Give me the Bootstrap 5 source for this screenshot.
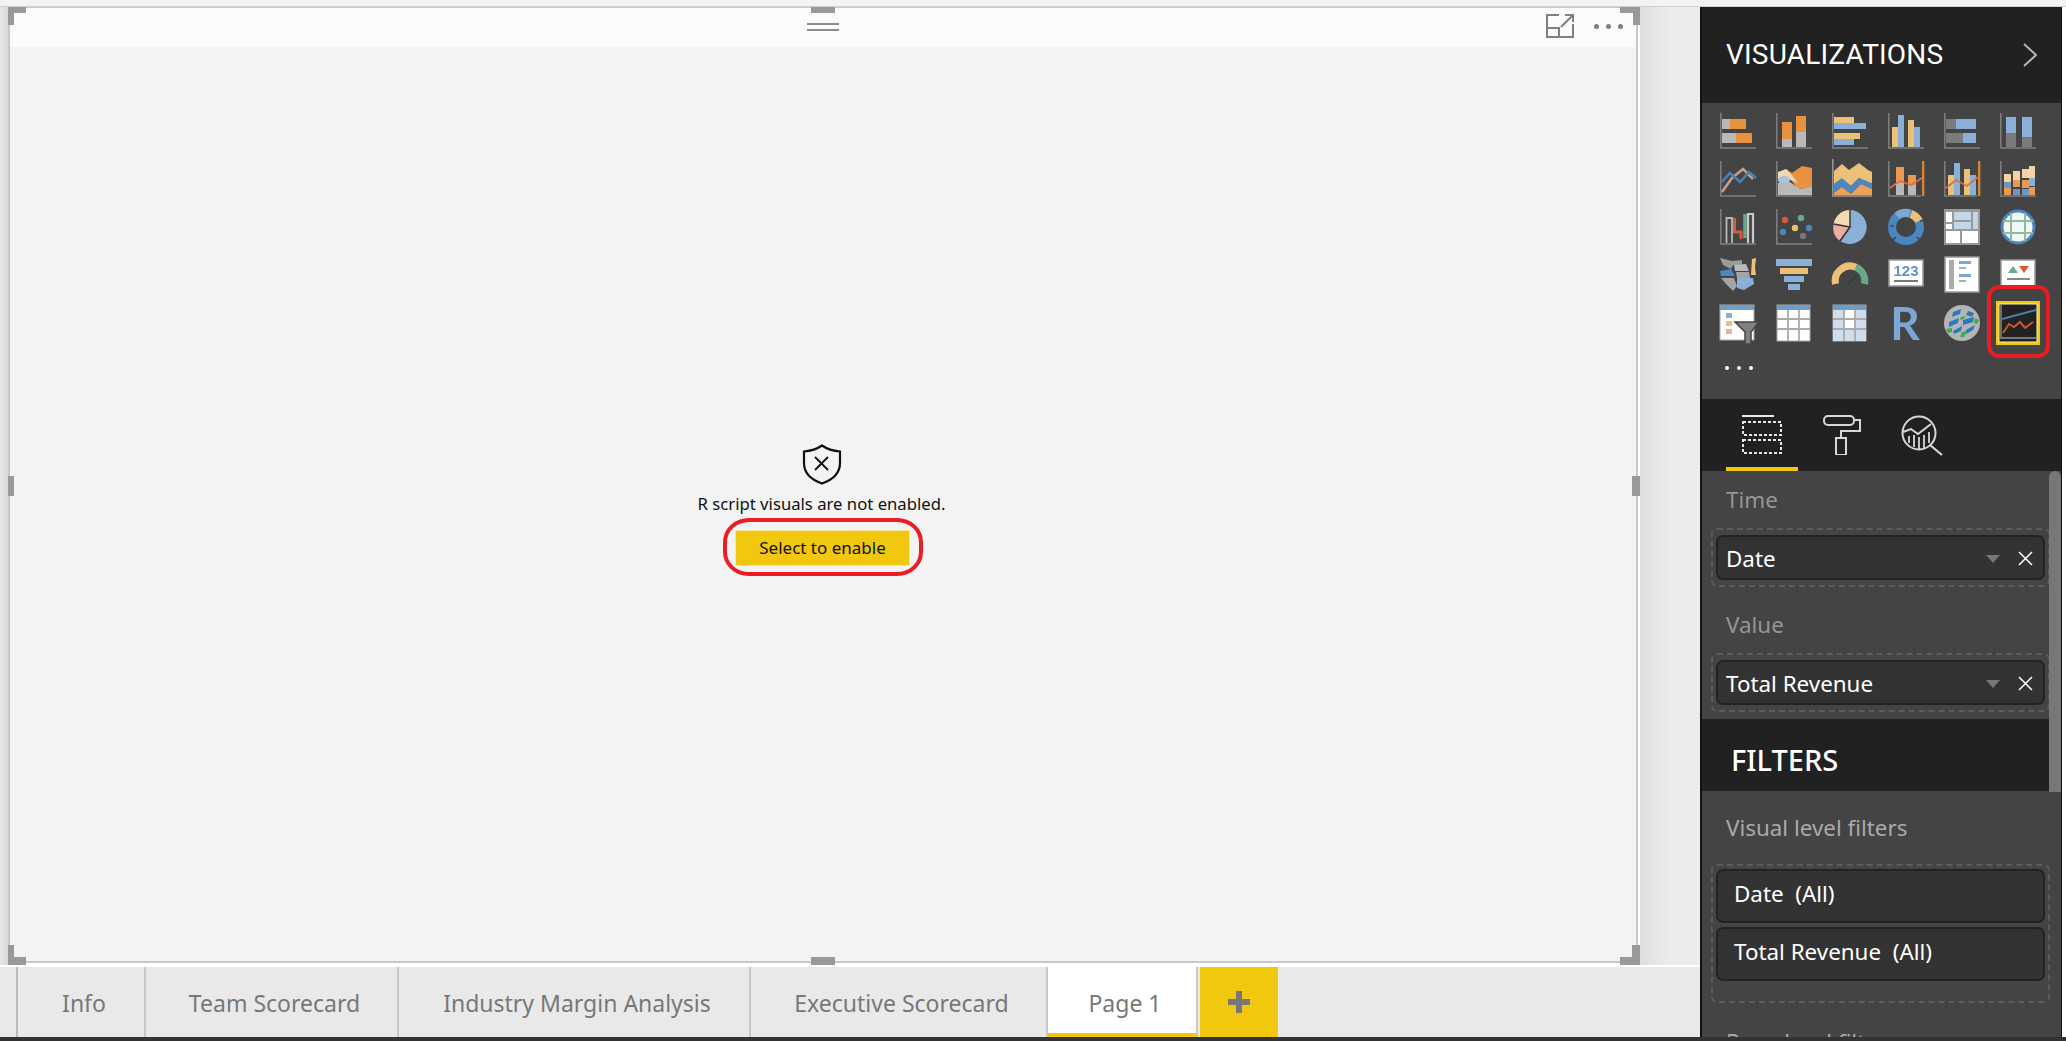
<!DOCTYPE html>
<html lang="en">
<head>
<meta charset="UTF-8">
<meta name="viewport" content="width=device-width, initial-scale=1.0">
<title>R script visual</title>
<link rel="stylesheet" href="https://cdn.jsdelivr.net/npm/bootstrap@5.3.0/dist/css/bootstrap.min.css">
<style>
html, body { height: 100%; }
body { font-family: "Noto Sans", "Open Sans", sans-serif; background: #fff; overflow: hidden; }
.app-root { height: 1041px; }
.top-strip { height: 7px; background: #f3f3f3; border-bottom: 1px solid #d0d0d0; flex: none; }
.bottom-strip { height: 4px; background: #333; flex: none; }
.work-area { width: 1700px; flex: none; }
.canvas-wrap { padding-left: 8px; padding-right: 62px; background: linear-gradient(90deg, #e8e8e8 0, #d8d8d8 8px, #dedede 1640px, #ececec 1670px); height: 958px; flex: none; }
.visual-box { height: 956px; background: #f3f3f3; border: 2px solid #c8c8c8; border-top-width: 1px; box-shadow: 2px 2px 0 #fff; }
.visual-head { height: 39px; background: #fbfbfb; }
.grip-lines { width: 32px; margin-bottom: 2px; }
.grip-lines i { display: block; height: 2px; background: #8c8c8c; }
.grip-lines i + i { margin-top: 4px; }
.head-dots i { width: 5px; height: 5px; background: #808080; border-radius: 50%; display: block; }
.head-tools { right: 13px; top: 6px; }
.visual-body { padding-top: 1px; padding-right: 3px; }
.warn-text { font-size: 16.7px; color: #111; line-height: 24px; margin-top: 7px; }
.enable-wrap { margin-top: 14px; margin-left: 2px; }
.enable-btn { width: 175px; height: 36px; background: #f2c80f; border: 1px solid #f6e9a8; border-radius: 0; color: #111; font-size: 17px; line-height: 20px; padding: 0; }
.red-ring { position: absolute; border: 4px solid #ed1c24; pointer-events: none; }
.ring-btn { left: -12px; right: -13px; top: -12px; bottom: -10px; border-radius: 26px / 24px; }
.ring-viz { left: 287px; top: 278px; width: 63px; height: 73px; border-radius: 12px; }
.size-grip { position: absolute; background: #999; }
.grip-tl-h { left: -2px; top: -1px; width: 18px; height: 6px; }
.grip-tl-v { left: -2px; top: -1px; width: 6px; height: 18px; }
.grip-tr-h { right: -4px; top: -1px; width: 20px; height: 6px; }
.grip-tr-v { right: -4px; top: -1px; width: 7px; height: 18px; }
.grip-bl-h { left: -2px; bottom: -4px; width: 18px; height: 8px; }
.grip-bl-v { left: -2px; bottom: -4px; width: 6px; height: 20px; }
.grip-br-h { right: -4px; bottom: -4px; width: 20px; height: 8px; }
.grip-br-v { right: -4px; bottom: -4px; width: 8px; height: 20px; }
.grip-ml { left: -2px; top: 468px; width: 6px; height: 20px; }
.grip-mr { right: -4px; top: 468px; width: 8px; height: 20px; }
.grip-tm { left: 801px; top: -1px; width: 24px; height: 6px; }
.grip-bm { left: 801px; bottom: -4px; width: 24px; height: 8px; }
.tab-strip { height: 72px; flex: none; border-top: 2px solid #fff; background: #e9e9e9; }
.tab-lead { width: 18px; border-right: 2px solid #bbb; }
.page-tab { font-size: 23px; color: #777; border-right: 2px solid #c8c8c8; display: flex; align-items: center; justify-content: center; padding-top: 2px; padding-left: 6px; white-space: nowrap; }
.tab-info { width: 128px; }
.tab-team { width: 253px; }
.tab-margin { width: 352px; }
.tab-exec { width: 297px; }
.tab-page { width: 150px; }
.page-tab.active-tab { background: #fff; border-bottom: 4px solid #f2c80f; padding-top: 6px; }
.add-tab { width: 78px; margin-left: 2px; background: #f2c80f; }
.side-pane { width: 366px; flex: none; background: #fff; }
.pane-inner { width: 362px; border-left: 2px solid #111; border-right: 1px solid #111; background: #444; color: #fff; height: 1030px; }
.pane-head { height: 96px; background: #212121; flex: none; padding: 0 24px; }
.pane-title { font-family: Roboto, sans-serif; font-size: 28px; letter-spacing: .2px; }
.viz-grid { height: 296px; flex: none; padding: 10px 0 0 18px; }
.viz-row { display: grid; grid-template-columns: repeat(6, 36px); column-gap: 20px; height: 48px; }
.viz-tile { width: 36px; height: 36px; display: block; filter: blur(.3px); overflow: visible; }
.viz-more { padding: 13px 0 0 5px; gap: 8px; }
.viz-more i { width: 4px; height: 4px; background: #fff; border-radius: 50%; display: block; }
.well-tabs { height: 72px; background: #212121; flex: none; padding-left: 24px; }
.well-tab { width: 72px; height: 72px; border-bottom: 4px solid transparent; }
.well-tab.tab-on { border-bottom-color: #f2c80f; }
.well-tab + .well-tab { width: 80px; padding-left: 7px; }
.fields-area { height: 248px; flex: none; position: relative; }
.pane-scroll { position: absolute; right: 0; top: 0; width: 12px; height: 321px; background: #777; border-radius: 6px 6px 0 0; z-index: 2; }
.field-label { font-size: 22.4px; line-height: 28px; color: #959595; padding-left: 24px; }
.drop-well { margin: 0 11px 0 9px; border: 2px dashed #5c5c5c; border-radius: 6px; padding: 5px 3px; }
.field-pill { height: 45px; background: #333; border: 2px solid #232323; border-radius: 7px; padding: 2px 10px 0 8px; font-size: 22.4px; }
.caret-down { width: 0; height: 0; border: 7px solid transparent; border-top: 8px solid #777; border-bottom: 0; margin-right: 18px; }
.filter-head { height: 72px; background: #212121; flex: none; padding: 10px 0 0 29px; font-size: 29px; font-weight: 500; }
.filter-well { padding-top: 3px; padding-bottom: 20px; }
.filter-pill { height: 54px; padding: 0 0 5px 16px; margin-bottom: 4px; }
.filter-note { color: #aaa; }
</style>
</head>
<body>
<div class="app-root d-flex flex-column">
  <div class="top-strip"></div>
  <div class="d-flex flex-grow-1 overflow-hidden">
    <div class="work-area d-flex flex-column">
      <div class="canvas-wrap">
        <div class="visual-box d-flex flex-column position-relative">
          <div class="visual-head d-flex justify-content-center align-items-center position-relative">
            <div class="grip-lines"><i></i><i></i></div>
            <div class="head-tools position-absolute d-flex align-items-center gap-3">
              <svg width="28" height="24" viewBox="0 0 28 24" fill="none" stroke="#808080" stroke-width="2"><path d="M13 1H1V23H27V10"/><path d="M1 14H13V23"/><path d="M15 13L27 1M19 1H27V8"/></svg>
              <div class="head-dots d-flex ms-1" style="gap:7px"><i></i><i></i><i></i></div>
            </div>
          </div>
          <div class="visual-body flex-grow-1 d-flex flex-column align-items-center justify-content-center">
            <svg width="40" height="41" viewBox="0 0 40 41" fill="none" stroke="#111" stroke-width="2.2"><path d="M20 1.500C15 5 8 7 2 7.500V19C2 30 10 36 20 39.500C30 36 38 30 38 19V7.500C32 7 25 5 20 1.500Z"/><path d="M13 13L26 26M26 13L13 26" stroke-width="1.800"/></svg>
            <div class="warn-text">R script visuals are not enabled.</div>
            <div class="enable-wrap position-relative">
              <button type="button" class="btn enable-btn">Select to enable</button>
              <div class="red-ring ring-btn"></div>
            </div>
          </div>
          <div class="size-grip grip-tl-h"></div>
          <div class="size-grip grip-tl-v"></div>
          <div class="size-grip grip-tr-h"></div>
          <div class="size-grip grip-tr-v"></div>
          <div class="size-grip grip-bl-h"></div>
          <div class="size-grip grip-bl-v"></div>
          <div class="size-grip grip-br-h"></div>
          <div class="size-grip grip-br-v"></div>
          <div class="size-grip grip-ml"></div>
          <div class="size-grip grip-mr"></div>
          <div class="size-grip grip-tm"></div>
          <div class="size-grip grip-bm"></div>
        </div>
      </div>
      <div class="tab-strip d-flex">
        <div class="tab-lead"></div>
        <div class="page-tab tab-info">Info</div>
        <div class="page-tab tab-team">Team Scorecard</div>
        <div class="page-tab tab-margin">Industry Margin Analysis</div>
        <div class="page-tab tab-exec">Executive Scorecard</div>
        <div class="page-tab tab-page active-tab">Page 1</div>
        <div class="add-tab d-flex align-items-center justify-content-center">
          <svg width="24" height="24" viewBox="0 0 24 24" fill="#777"><path d="M9 1h6v8h8v6h-8v8H9v-8H1V9h8z"/></svg>
        </div>
      </div>
    </div>

    <div class="side-pane position-relative">
      <div class="pane-inner d-flex flex-column overflow-hidden">
        <div class="pane-head d-flex align-items-center justify-content-between">
          <span class="pane-title">VISUALIZATIONS</span>
          <svg width="14" height="24" viewBox="0 0 14 24" fill="none" stroke="#b5b5b5" stroke-width="2"><path d="M1 1L13 12L1 23"/></svg>
        </div>
        <div class="viz-grid">
          <div class="viz-row">
            <svg class="viz-tile" viewBox="0 0 36 36"><path d="M.8 0V35H36" fill="none" stroke="#808080" stroke-width="1.500"/><rect x="2" y="6" width="8" height="10" fill="#b9b9b9"/><rect x="10" y="6" width="16" height="10" fill="#e8913e"/><rect x="2" y="20" width="14" height="10" fill="#b9b9b9"/><rect x="16" y="20" width="16" height="10" fill="#e8913e"/></svg>
            <svg class="viz-tile" viewBox="0 0 36 36"><path d="M.8 0V35H36" fill="none" stroke="#808080" stroke-width="1.500"/><rect x="6" y="9" width="10" height="17" fill="#e8913e"/><rect x="6" y="26" width="10" height="8" fill="#b9b9b9"/><rect x="20" y="3" width="10" height="16" fill="#e8913e"/><rect x="20" y="19" width="10" height="15" fill="#b9b9b9"/></svg>
            <svg class="viz-tile" viewBox="0 0 36 36"><path d="M.8 0V35H36" fill="none" stroke="#808080" stroke-width="1.500"/><rect x="2" y="4" width="20" height="6" fill="#ecc077"/><rect x="2" y="10" width="32" height="6" fill="#8ab0d8"/><rect x="2" y="20" width="26" height="6" fill="#ecc077"/><rect x="2" y="26" width="20" height="6" fill="#8ab0d8"/></svg>
            <svg class="viz-tile" viewBox="0 0 36 36"><path d="M.8 0V35H36" fill="none" stroke="#808080" stroke-width="1.500"/><rect x="4" y="14" width="6" height="20" fill="#ecc077"/><rect x="10" y="2" width="6" height="32" fill="#8ab0d8"/><rect x="20" y="7" width="6" height="27" fill="#ecc077"/><rect x="26" y="14" width="6" height="20" fill="#8ab0d8"/></svg>
            <svg class="viz-tile" viewBox="0 0 36 36"><path d="M.8 0V35H36" fill="none" stroke="#808080" stroke-width="1.500"/><rect x="2" y="6" width="10" height="10" fill="#7b7b7b"/><rect x="12" y="6" width="20" height="10" fill="#8ab0d8"/><rect x="2" y="20" width="17" height="10" fill="#7b7b7b"/><rect x="19" y="20" width="13" height="10" fill="#8ab0d8"/></svg>
            <svg class="viz-tile" viewBox="0 0 36 36"><path d="M.8 0V35H36" fill="none" stroke="#808080" stroke-width="1.500"/><rect x="6" y="4" width="10" height="16" fill="#8ab0d8"/><rect x="6" y="20" width="10" height="14" fill="#7b7b7b"/><rect x="22" y="4" width="10" height="20" fill="#8ab0d8"/><rect x="22" y="24" width="10" height="10" fill="#7b7b7b"/></svg>
          </div>
          <div class="viz-row">
            <svg class="viz-tile" viewBox="0 0 36 36"><path d="M.8 0V35H36" fill="none" stroke="#808080" stroke-width="1.500"/><path d="M2 31L12 17L23 8L33 18" fill="none" stroke="#c59c8e" stroke-width="2.600"/><path d="M2 21L10 12L20 21L29 11L36 17" fill="none" stroke="#4a80b4" stroke-width="2.400"/></svg>
            <svg class="viz-tile" viewBox="0 0 36 36"><path d="M.8 0V35H36" fill="none" stroke="#808080" stroke-width="1.500"/><path d="M2 12L10 8L16 12L26 5L36 7V27L22 28L14 18L2 18Z" fill="#e8913e"/><path d="M2 11L10 8L15 13L22 22L8 16L2 18Z" fill="#f0d9b0"/><ellipse cx="8" cy="19" rx="6" ry="4" fill="#a9c4df"/><path d="M2 34V22L14 21L24 28L36 26V34Z" fill="#b9b9b9"/></svg>
            <svg class="viz-tile" viewBox="0 0 36 36"><path d="M.8 -2V35H40" fill="none" stroke="#999" stroke-width="1.500"/><path d="M2 10L10 3L17 9L27 2L36 9V22L27 17L19 25L10 18L2 23Z" fill="#ecc077"/><path d="M2 23L10 17L19 25L27 17L40 22V28L29 23L19 33L10 26L2 32Z" fill="#4a86c0"/><path d="M2 32L10 26L19 33L29 23L40 28V34H2Z" fill="#eba25a"/><path d="M36 9L40 11V22L36 21Z" fill="#ecc077"/></svg>
            <svg class="viz-tile" viewBox="0 0 36 36"><path d="M.8 0V35H33" fill="none" stroke="#808080" stroke-width="1.500"/><rect x="34" y="0" width="2.400" height="35" fill="#d2823a"/><rect x="8" y="6" width="8" height="16" fill="#e89a55"/><rect x="8" y="22" width="8" height="12" fill="#b9b9b9"/><rect x="20" y="14" width="8" height="10" fill="#e89a55"/><rect x="20" y="24" width="8" height="10" fill="#b9b9b9"/><path d="M2 27L12 20L23 24L34 17" fill="none" stroke="#d9704a" stroke-width="1.800"/></svg>
            <svg class="viz-tile" viewBox="0 0 36 36"><path d="M.8 0V35H33" fill="none" stroke="#808080" stroke-width="1.500"/><rect x="34" y="0" width="2.400" height="35" fill="#d2823a"/><rect x="4" y="14" width="6" height="20" fill="#ecc077"/><rect x="10" y="2" width="6" height="32" fill="#8ab0d8"/><rect x="20" y="8" width="6" height="26" fill="#ecc077"/><rect x="26" y="14" width="6" height="20" fill="#8ab0d8"/><path d="M2 27L12 19L23 25L34 16" fill="none" stroke="#d9704a" stroke-width="1.800"/></svg>
            <svg class="viz-tile" viewBox="0 0 36 36"><path d="M.8 0V35H36" fill="none" stroke="#808080" stroke-width="1.500"/><rect x="4" y="13" width="7" height="8" fill="#f2d3a4"/><rect x="4" y="21" width="7" height="6" fill="#6f96bd"/><rect x="4" y="27" width="7" height="7" fill="#e89a55"/><rect x="13" y="10" width="7" height="9" fill="#f2d3a4"/><rect x="13" y="19" width="7" height="7" fill="#e89a55"/><rect x="13" y="28" width="7" height="6" fill="#6f96bd"/><rect x="22" y="8" width="7" height="9" fill="#f2d3a4"/><rect x="22" y="19" width="7" height="8" fill="#e89a55"/><rect x="22" y="28" width="7" height="6" fill="#6f96bd"/><rect x="29" y="5" width="6" height="12" fill="#f2d3a4"/><rect x="29" y="17" width="6" height="8" fill="#8ab0d8"/><rect x="29" y="26" width="6" height="8" fill="#e89a55"/></svg>
          </div>
          <div class="viz-row">
            <svg class="viz-tile" viewBox="0 0 36 36"><path d="M.8 0V35H36" fill="none" stroke="#808080" stroke-width="1.500"/><path d="M6.500 34V9H12V34" fill="none" stroke="#b9b9b9" stroke-width="1.800"/><path d="M14.500 9V23H21V30" fill="none" stroke="#d9593a" stroke-width="3"/><path d="M25 29V5" fill="none" stroke="#6ba889" stroke-width="3.500"/><path d="M28 34V5H33V34" fill="none" stroke="#c8c8c8" stroke-width="2.200"/></svg>
            <svg class="viz-tile" viewBox="0 0 36 36"><path d="M.8 0V35H36" fill="none" stroke="#808080" stroke-width="1.500"/><circle cx="9" cy="11" r="3.200" fill="#d9593a"/><circle cx="25" cy="9" r="3.200" fill="#6ba889"/><circle cx="19" cy="19" r="3.200" fill="#e6c06f"/><circle cx="33" cy="19" r="3.200" fill="#4a86c0"/><circle cx="7" cy="23" r="3.200" fill="#4a86c0"/><circle cx="27" cy="27" r="3.200" fill="#777"/></svg>
            <svg class="viz-tile" viewBox="0 0 36 36"><path d="M18 18V1A17 17 0 1 1 8 32Z" fill="#8ab0d8"/><path d="M18 18L8 32A17 17 0 0 1 1.500 15Z" fill="#ecaea0"/><path d="M18 18L1.500 15A17 17 0 0 1 18 1Z" fill="#f2dcb4"/><path d="M1.500 15L18 18L8 32" fill="none" stroke="#333" stroke-width="1.600"/><path d="M18 1V18" stroke="#333" stroke-width="1.400"/></svg>
            <svg class="viz-tile" viewBox="0 0 36 36"><circle cx="18" cy="18" r="14" fill="none" stroke="#4a86c0" stroke-width="8"/><path d="M9 7A14 14 0 0 1 22 4.500" fill="none" stroke="#7ba7d4" stroke-width="8"/><path d="M23 5A14 14 0 0 1 31 12" fill="none" stroke="#ecc077" stroke-width="8"/><path d="M32 12L36 11M29 28L32 31M8 28L5 31M2 17H6" stroke="#444" stroke-width="1.500"/></svg>
            <svg class="viz-tile" viewBox="0 0 36 36"><rect x="0" y="0" width="36" height="36" fill="#999"/><rect x="2" y="3" width="6" height="10" fill="#fff"/><rect x="2" y="15" width="6" height="5" fill="#fff"/><rect x="10" y="3" width="17" height="8" fill="#c4d7ea"/><rect x="10" y="13" width="17" height="7" fill="#c4d7ea"/><rect x="29" y="3" width="5" height="17" fill="#c4d7ea"/><rect x="2" y="22" width="14" height="12" fill="#fff"/><rect x="18" y="22" width="16" height="12" fill="#fff"/></svg>
            <svg class="viz-tile" viewBox="0 0 36 36"><circle cx="18" cy="18" r="16" fill="#f4f6f3" stroke="#4a86c0" stroke-width="3"/><path d="M3 12H33M3 24H33M11 4V32M25 4V32" fill="none" stroke="#8fbaa4" stroke-width="2"/></svg>
          </div>
          <div class="viz-row">
            <svg class="viz-tile" viewBox="0 0 36 36"><path d="M0 1L12 4L22 3V8L13 8L11 12L3 8Z" fill="#9b9b9b"/><path d="M14 8L26 7L29 14L15 14Z" fill="#b9b9b9"/><path d="M0 14L11 12L15 19H1Z" fill="#4a86c0"/><path d="M1 21L14 21L17 29L13 34L6 27Z" fill="#a5a5a5"/><path d="M17 21H33L34 27L24 33L17 31Z" fill="#8ab0d8"/><path d="M16 15L29 15L30 21H17Z" fill="#a5a5a5"/><path d="M32 2L36 1L35 10L36 18L31 18Z" fill="#ecc077"/></svg>
            <svg class="viz-tile" viewBox="0 0 36 36"><rect x="0" y="2" width="36" height="7" fill="#8ab0d8"/><rect x="4" y="11" width="28" height="6" fill="#ecc077"/><rect x="8" y="19" width="20" height="6" fill="#8ab0d8"/><rect x="12" y="27" width="12" height="6" fill="#8ab0d8"/></svg>
            <svg class="viz-tile" viewBox="0 0 36 36"><path d="M3.500 27A15 15 0 0 1 24 10.200" fill="none" stroke="#ecc077" stroke-width="7"/><path d="M24 10.200A15 15 0 0 1 32.500 27" fill="none" stroke="#6ba889" stroke-width="7"/><path d="M16 27L24 19" stroke="#3a3a3a" stroke-width="3"/></svg>
            <svg class="viz-tile" viewBox="0 0 36 36"><rect x="1" y="3" width="34" height="26" fill="#fff" stroke="#999" stroke-width="1.500"/><text x="18" y="19" text-anchor="middle" font-family="Liberation Sans, sans-serif" font-weight="700" font-size="15" fill="#5e95c8">123</text><rect x="6" y="23" width="24" height="2" fill="#777"/></svg>
            <svg class="viz-tile" viewBox="0 0 36 36"><rect x="1" y="0" width="34" height="35" fill="#fff" stroke="#999" stroke-width="1.500"/><rect x="5" y="3" width="5" height="29" fill="#aaa"/><rect x="15" y="4" width="12" height="3" fill="#7ba7d4"/><rect x="15" y="10" width="7" height="2" fill="#aaa"/><rect x="15" y="17" width="12" height="3" fill="#7ba7d4"/><rect x="15" y="23" width="7" height="2" fill="#aaa"/></svg>
            <svg class="viz-tile" viewBox="0 0 36 36"><rect x="1" y="3" width="34" height="26" fill="#fff" stroke="#999" stroke-width="1.500"/><path d="M8 16L13 9L18 16Z" fill="#6ba889"/><path d="M19 9H29L24 16Z" fill="#d9593a"/><rect x="7" y="21" width="23" height="2" fill="#888"/></svg>
          </div>
          <div class="viz-row">
            <svg class="viz-tile" viewBox="0 0 36 36"><rect x="0" y="0" width="34" height="35" fill="#fff" stroke="#aaa"/><rect x="0" y="0" width="34" height="5" fill="#6e9ccb"/><rect x="6" y="8" width="6" height="5" fill="#8ab0d8"/><rect x="6" y="16" width="6" height="5" fill="#ecc077"/><rect x="6" y="24" width="6" height="5" fill="#ecaea0"/><path d="M15 17H39L31 27V39H25V27Z" fill="#808080" stroke="#444" stroke-width="1.500"/></svg>
            <svg class="viz-tile" viewBox="0 0 36 36"><rect x="1" y="0" width="33" height="36" fill="#fff" stroke="#aaa"/><rect x="1" y="0" width="33" height="5" fill="#6e9ccb"/><path d="M1 14H34M1 24H34M12 5V36M23 5V36" stroke="#aaa" stroke-width="1.800"/></svg>
            <svg class="viz-tile" viewBox="0 0 36 36"><rect x="1" y="0" width="33" height="36" fill="#fff" stroke="#aaa"/><rect x="1" y="0" width="33" height="5" fill="#6e9ccb"/><rect x="1" y="5" width="11" height="31" fill="#cfdeec"/><rect x="23" y="5" width="11" height="31" fill="#cfdeec"/><rect x="1" y="24" width="33" height="12" fill="#cfdeec"/><path d="M1 14H34M1 24H34M12 5V36M23 5V36" stroke="#aaa" stroke-width="1.800"/></svg>
            <svg class="viz-tile" viewBox="0 0 36 36"><text x="17" y="35" text-anchor="middle" font-family="Lato, sans-serif" font-weight="700" font-size="46" fill="#7ba7d4">R</text></svg>
            <svg class="viz-tile" viewBox="0 0 36 36"><circle cx="18" cy="18" r="18" fill="#b5b5b5"/><path d="M9 7L17 4L16 9L8 12ZM24 6L30 8L28 12L22 10ZM5 17L15 13L14 18L5 22ZM19 15L30 12L29 17L19 20ZM9 26L18 21L17 26L10 29ZM22 25L31 20L29 25L22 29Z" fill="#2a78c0"/><path d="M17 12L21 11L20 14L16 15ZM31 13L35 15L33 19L30 18ZM18 27L23 26L20 32L16 32ZM2 24L8 23L8 27L4 28Z" fill="#3cae4c"/></svg>
            <svg class="viz-tile" viewBox="0 0 36 36"><rect x="-2.500" y="-2.500" width="41" height="41" fill="#222" stroke="#f2c80f" stroke-width="3"/><rect x="-1" y="-1" width="38" height="38" fill="none" stroke="#f7f0c0" stroke-width="1"/><path d="M1 0V33H36" fill="none" stroke="#777" stroke-width="1.800"/><path d="M2 14L36 5" fill="none" stroke="#4a80b4" stroke-width="2"/><path d="M3 28L9 19L14 22L20 17L25 23L33 17" fill="none" stroke="#d2552c" stroke-width="2"/></svg>
          </div>
          <div class="viz-more d-flex"><i></i><i></i><i></i></div>
        </div>
        <div class="well-tabs d-flex">
          <div class="well-tab tab-on d-flex justify-content-center pt-3">
            <svg width="40" height="39" viewBox="0 0 40 39" fill="none" stroke="#e8e8e8" stroke-width="2"><path d="M0 1H32" /><path d="M1 7H39V20H1ZM1 25H39V38H1Z" stroke-dasharray="3 2"/></svg>
          </div>
          <div class="well-tab d-flex justify-content-center pt-3">
            <svg width="38" height="40" viewBox="0 0 38 40" fill="none" stroke="#d8d8d8" stroke-width="2"><rect x="1" y="1" width="30" height="9" rx="4"/><path d="M31 5H37V16H18V23"/><rect x="13" y="23" width="10" height="17"/></svg>
          </div>
          <div class="well-tab d-flex justify-content-center pt-3">
            <svg width="42" height="41" viewBox="0 0 42 41" fill="none" stroke="#d8d8d8" stroke-width="2"><circle cx="18" cy="18" r="16.500"/><path d="M2 17L10 14L17 19L30 9"/><path d="M8 21V28M13 20V32M18 22V34M23 20V33M28 17V28" stroke-width="1.800"/><path d="M29 30L41 40" stroke-width="2.200"/></svg>
          </div>
        </div>
        <div class="fields-area">
          <div class="pane-scroll"></div>
          <div class="field-label" style="padding-top:15px">Time</div>
          <div class="drop-well" style="margin-top:14px">
            <div class="field-pill d-flex align-items-center">
              <span class="flex-grow-1">Date</span>
              <span class="caret-down"></span>
              <svg width="15" height="15" viewBox="0 0 15 15" stroke="#fff" stroke-width="1.500"><path d="M1 1L14 14M14 1L1 14"/></svg>
            </div>
          </div>
          <div class="field-label" style="padding-top:24px">Value</div>
          <div class="drop-well" style="margin-top:14px">
            <div class="field-pill d-flex align-items-center">
              <span class="flex-grow-1">Total Revenue</span>
              <span class="caret-down"></span>
              <svg width="15" height="15" viewBox="0 0 15 15" stroke="#fff" stroke-width="1.500"><path d="M1 1L14 14M14 1L1 14"/></svg>
            </div>
          </div>
        </div>
        <div class="filter-head d-flex align-items-center">FILTERS</div>
        <div class="flex-grow-1">
          <div class="field-label filter-note" style="padding-top:23px">Visual level filters</div>
          <div class="drop-well filter-well" style="margin-top:22px">
            <div class="field-pill filter-pill d-flex align-items-center">Date&nbsp; (All)</div>
            <div class="field-pill filter-pill d-flex align-items-center mb-0">Total Revenue&nbsp; (All)</div>
          </div>
          <div class="field-label filter-note" style="padding-top:25px">Page level filters</div>
        </div>
      </div>
      <div class="red-ring ring-viz"></div>
    </div>
  </div>
  <div class="bottom-strip"></div>
</div>
<script src="https://cdn.jsdelivr.net/npm/bootstrap@5.3.0/dist/js/bootstrap.bundle.min.js"></script>
</body>
</html>
